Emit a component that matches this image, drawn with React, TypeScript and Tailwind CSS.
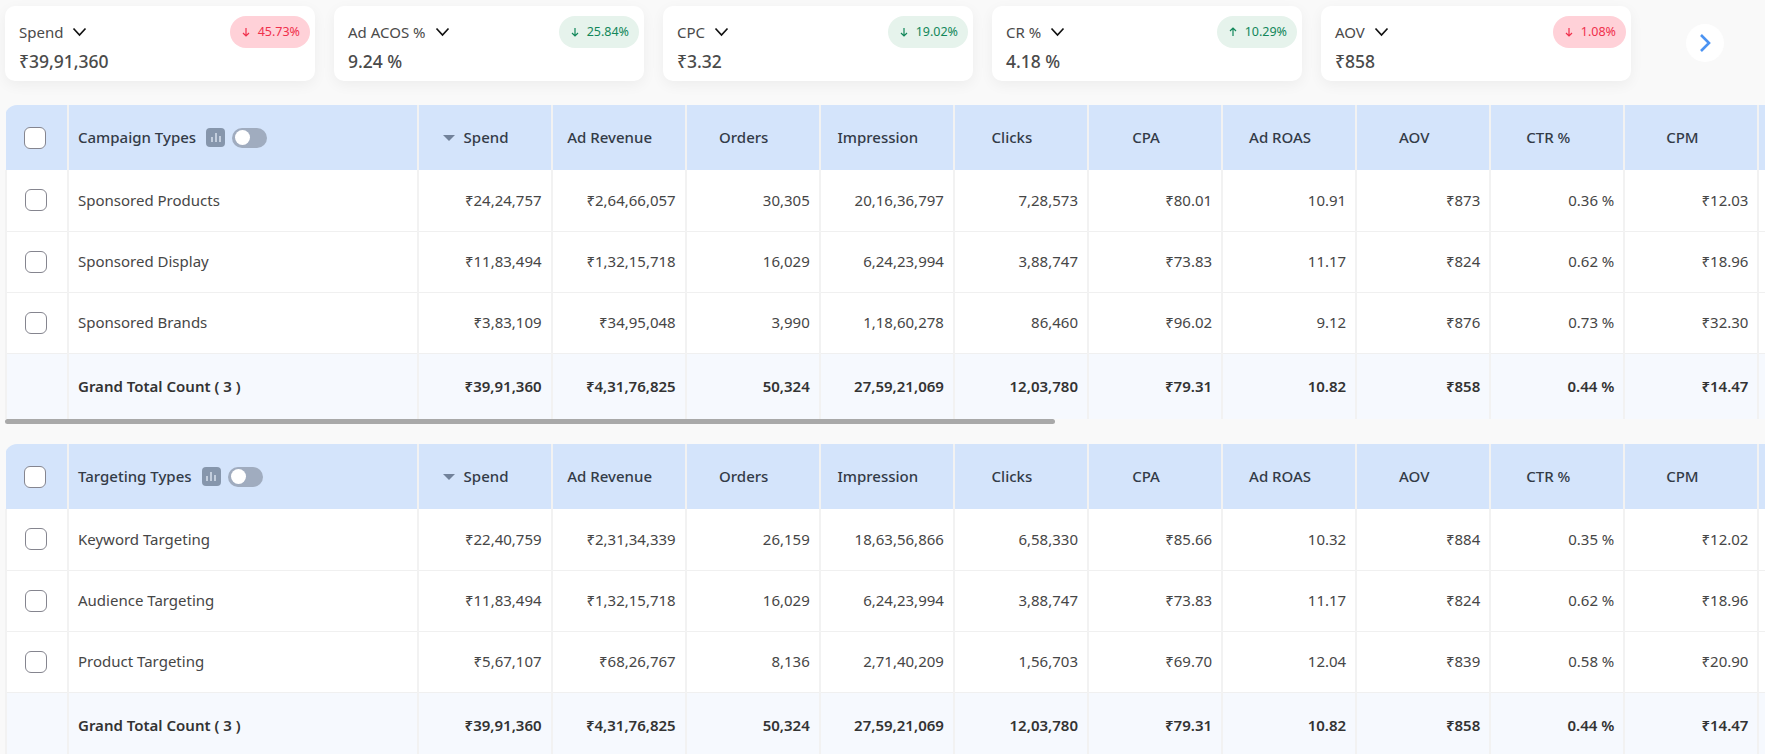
import React from "react";

const cards = [
  { label: "Spend", value: "₹39,91,360", pct: "45.73%", up: false, good: false },
  { label: "Ad ACOS %", value: "9.24 %", pct: "25.84%", up: false, good: true },
  { label: "CPC", value: "₹3.32", pct: "19.02%", up: false, good: true },
  { label: "CR %", value: "4.18 %", pct: "10.29%", up: true, good: true },
  { label: "AOV", value: "₹858", pct: "1.08%", up: false, good: false },
];

const columns = ["Spend", "Ad Revenue", "Orders", "Impression", "Clicks", "CPA", "Ad ROAS", "AOV", "CTR %", "CPM"];

const campaignRows = [
  ["Sponsored Products", "₹24,24,757", "₹2,64,66,057", "30,305", "20,16,36,797", "7,28,573", "₹80.01", "10.91", "₹873", "0.36 %", "₹12.03"],
  ["Sponsored Display", "₹11,83,494", "₹1,32,15,718", "16,029", "6,24,23,994", "3,88,747", "₹73.83", "11.17", "₹824", "0.62 %", "₹18.96"],
  ["Sponsored Brands", "₹3,83,109", "₹34,95,048", "3,990", "1,18,60,278", "86,460", "₹96.02", "9.12", "₹876", "0.73 %", "₹32.30"],
];

const targetingRows = [
  ["Keyword Targeting", "₹22,40,759", "₹2,31,34,339", "26,159", "18,63,56,866", "6,58,330", "₹85.66", "10.32", "₹884", "0.35 %", "₹12.02"],
  ["Audience Targeting", "₹11,83,494", "₹1,32,15,718", "16,029", "6,24,23,994", "3,88,747", "₹73.83", "11.17", "₹824", "0.62 %", "₹18.96"],
  ["Product Targeting", "₹5,67,107", "₹68,26,767", "8,136", "2,71,40,209", "1,56,703", "₹69.70", "12.04", "₹839", "0.58 %", "₹20.90"],
];

const totals = ["₹39,91,360", "₹4,31,76,825", "50,324", "27,59,21,069", "12,03,780", "₹79.31", "10.82", "₹858", "0.44 %", "₹14.47"];

function Checkbox() {
  return <div className="w-[22px] h-[22px] ml-[18px] rounded-[6px] border-[1.5px] border-[#85858f] bg-white" />;
}

function StatCard({ label, value, pct, up, good }: (typeof cards)[number]) {
  return (
    <div className="w-[310px] h-[75px] shrink-0 bg-white rounded-[10px] shadow-[0_4px_14px_rgba(0,0,0,0.05)] flex justify-between pl-[14px] pr-[5px] pt-[10px]">
      <div>
        <div className="flex items-center gap-[9px] h-[24px] mt-[4px] text-[15px] text-[#4a4a4a]">
          {label}
          <svg width="15" height="10" viewBox="0 0 15 10" fill="none" stroke="#111" strokeWidth="1.7">
            <path d="M1.500 1.500 7.500 8l6-6.500" />
          </svg>
        </div>
        <div className="mt-[4px] text-[17.500px] leading-[26px] font-medium text-[#4a4a4a]">{value}</div>
      </div>
      <div
        className={
          good
            ? "h-[32px] pl-[12px] pr-[10px] rounded-[16px] flex items-center gap-[8px] text-[12.500px] bg-[#e6f3ec] text-[#12875a]"
            : "h-[32px] pl-[12px] pr-[10px] rounded-[16px] flex items-center gap-[8px] text-[12.500px] bg-[#ffd1d8] text-[#f0304c]"
        }
      >
        <svg width="8" height="10" viewBox="0 0 8 10" fill="none" stroke="currentColor" strokeWidth="1.200" className={up ? "rotate-180" : ""}>
          <path d="M4 1v8M1 6l3 3 3-3" />
        </svg>
        {pct}
      </div>
    </div>
  );
}

function DataTable({ title, rows }: { title: string; rows: string[][] }) {
  return (
    <div>
      <div className="overflow-hidden rounded-tl-[12px]">
        <table className="table-fixed border-collapse w-[1886.600px] text-[15px]">
          <colgroup>
            <col className="w-[62px]" />
            <col className="w-[349.500px]" />
            {columns.map((c) => (
              <col key={c} className="w-[134.100px]" />
            ))}
            <col className="w-[134.100px]" />
          </colgroup>
          <thead>
            <tr className="h-[65px] bg-[#d4e4fb] text-[#333b47]">
              <th className="border-r-2 border-[#f2f2f2]">
                <Checkbox />
              </th>
              <th className="border-r-2 border-[#f2f2f2] pl-[9px] text-left font-medium">
                <div className="flex items-center">
                  {title}
                  <span className="ml-[10px] w-[19px] h-[19px] rounded-[4px] bg-[#8696ac] flex items-end justify-center gap-[2px] pb-[5px]">
                    <i className="w-[2px] h-[5px] bg-[#c3cedd]" />
                    <i className="w-[2px] h-[9px] bg-[#c3cedd]" />
                    <i className="w-[2px] h-[6px] bg-[#c3cedd]" />
                  </span>
                  <span className="ml-[7px] w-[35px] h-[20px] rounded-full bg-[#a0acbf] flex items-center pl-[3px]">
                    <i className="w-[15px] h-[15px] rounded-full bg-white" />
                  </span>
                </div>
              </th>
              {columns.map((c, i) => (
                <th key={c} className="border-r-2 border-[#f2f2f2] font-medium">
                  <div className="flex items-center justify-center">
                    {i === 0 && <span className="mr-[9px] w-0 h-0 border-x-[6px] border-x-transparent border-t-[6px] border-t-[#72829a]" />}
                    {c}
                    <span className="w-[18px]" />
                  </div>
                </th>
              ))}
              <th />
            </tr>
          </thead>
          <tbody className="text-[#464646]">
            {rows.map((row) => (
              <tr key={row[0]} className="h-[61px] bg-white border-b border-[#f0f0f0]">
                <td className="border-x-2 border-[#f2f2f2]">
                  <Checkbox />
                </td>
                {row.map((cell, i) => (
                  <td key={i} className={i === 0 ? "border-r-2 border-[#f2f2f2] pl-[9px]" : "border-r-2 border-[#f2f2f2] pr-[9px] text-right"}>
                    {cell}
                  </td>
                ))}
                <td />
              </tr>
            ))}
            <tr className="h-[66px] bg-[#f6f9fe] font-semibold text-[#333]">
              <td className="border-x-2 border-[#f2f2f2]" />
              <td className="border-r-2 border-[#f2f2f2] pl-[9px]">Grand Total Count ( 3 )</td>
              {totals.map((cell, i) => (
                <td key={i} className="border-r-2 border-[#f2f2f2] pr-[9px] text-right">
                  {cell}
                </td>
              ))}
              <td />
            </tr>
          </tbody>
        </table>
      </div>
      <div className="h-[5px] w-[1050px] rounded-full bg-[#a9a9a9]" />
    </div>
  );
}

export default function App() {
  return (
    <div className="h-screen overflow-hidden bg-[#f9f9f9] pl-[5px] font-['Noto_Sans',sans-serif]">
      <div className="flex items-center gap-[19px] pt-[6px]">
        {cards.map((c) => (
          <StatCard key={c.label} {...c} />
        ))}
        <button className="ml-[36px] w-[38px] h-[38px] -mt-[1px] rounded-full bg-white flex items-center justify-center">
          <svg width="12" height="20" viewBox="0 0 12 20" fill="none" stroke="#4b93f2" strokeWidth="2.600">
            <path d="M2 2l8 8-8 8" />
          </svg>
        </button>
      </div>
      <div className="mt-[24px] flex flex-col gap-[20px]">
        <DataTable title="Campaign Types" rows={campaignRows} />
        <DataTable title="Targeting Types" rows={targetingRows} />
      </div>
    </div>
  );
}
